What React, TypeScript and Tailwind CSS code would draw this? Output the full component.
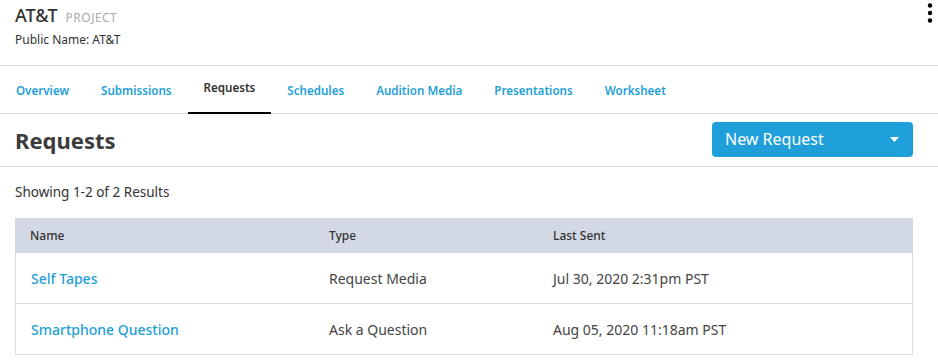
const TABS = ['Overview', 'Submissions', 'Requests', 'Schedules', 'Audition Media', 'Presentations', 'Worksheet'];

const ROWS = [
  { name: 'Self Tapes', type: 'Request Media', sent: 'Jul 30, 2020 2:31pm PST' },
  { name: 'Smartphone Question', type: 'Ask a Question', sent: 'Aug 05, 2020 11:18am PST' },
];

export default function App() {
  return (
    <div className="w-[938px] h-[361px] bg-white overflow-hidden text-[#333] font-['Noto_Sans','Liberation_Sans',sans-serif]">
      {/* Project header */}
      <div className="relative h-[66px] border-b border-[#dcdcdc] px-[15px] pt-[2px]">
        <div className="flex items-baseline gap-[8px]">
          <span className="text-[18px] font-medium text-[#333]">AT&amp;T</span>
          <span className="text-[12px] tracking-[0.04em] text-[#aaa]">PROJECT</span>
        </div>
        <div className="mt-[2px] text-[12px] text-[#333]">Public Name: AT&amp;T</div>
        <svg className="absolute right-[5px] top-[2px]" width="6" height="22" viewBox="0 0 6 22">
          <circle cx="3" cy="3.5" r="2.2" fill="#000" />
          <circle cx="3" cy="11" r="2.2" fill="#000" />
          <circle cx="3" cy="18.5" r="2.2" fill="#000" />
        </svg>
      </div>

      {/* Tabs */}
      <div className="flex h-[48px] border-b border-[#dcdcdc]">
        {TABS.map((tab) => (
          <div
            key={tab}
            className={
              tab === 'Requests'
                ? 'flex items-center px-4 text-[11.6px] font-semibold text-[#333] border-b-2 border-black -mb-px pb-[2px]'
                : 'flex items-center px-4 text-[11.6px] font-semibold text-[#1e9fd9] pt-[2px]'
            }
          >
            {tab}
          </div>
        ))}
      </div>

      {/* Title row */}
      <div className="flex items-center justify-between h-[53px] border-b border-[#dcdcdc] pl-[15px] pr-[25px]">
        <h1 className="text-[22px] font-bold text-[#3b3b3b]">Requests</h1>
        <button className="flex items-center justify-between w-[201px] h-[35px] rounded-[4px] bg-[#1e9fd9] pl-[13px] pr-[14px] text-[16px] text-white mt-[-2px]">
          <span>New Request</span>
          <svg width="9" height="5" viewBox="0 0 9 5">
            <path d="M0 0h9L4.5 5z" fill="#fff" />
          </svg>
        </button>
      </div>

      <div className="px-[15px] pt-[15px] text-[13.5px] text-[#333]">Showing 1-2 of 2 Results</div>

      {/* Table */}
      <div className="mx-[15px] mt-[16px] w-[898px] border-x border-b border-[#dcdcdc]">
        <div className="grid grid-cols-[299px_224px_1fr] h-[35px] items-center bg-[#d3d9e4] text-[12px] font-medium text-[#333] -mx-px px-[15px]">
          <div>Name</div>
          <div>Type</div>
          <div>Last Sent</div>
        </div>
        {ROWS.map((row, i) => (
          <div
            key={row.name}
            className={
              i === 0
                ? 'grid grid-cols-[298px_224px_1fr] h-[51px] items-center px-[15px] text-[14px] border-b border-[#dcdcdc]'
                : 'grid grid-cols-[298px_224px_1fr] h-[50px] items-center px-[15px] text-[14px]'
            }
          >
            <div className="text-[#1e9fd9] font-medium">{row.name}</div>
            <div className="text-[#444]">{row.type}</div>
            <div className="text-[#444]">{row.sent}</div>
          </div>
        ))}
      </div>
    </div>
  );
}
